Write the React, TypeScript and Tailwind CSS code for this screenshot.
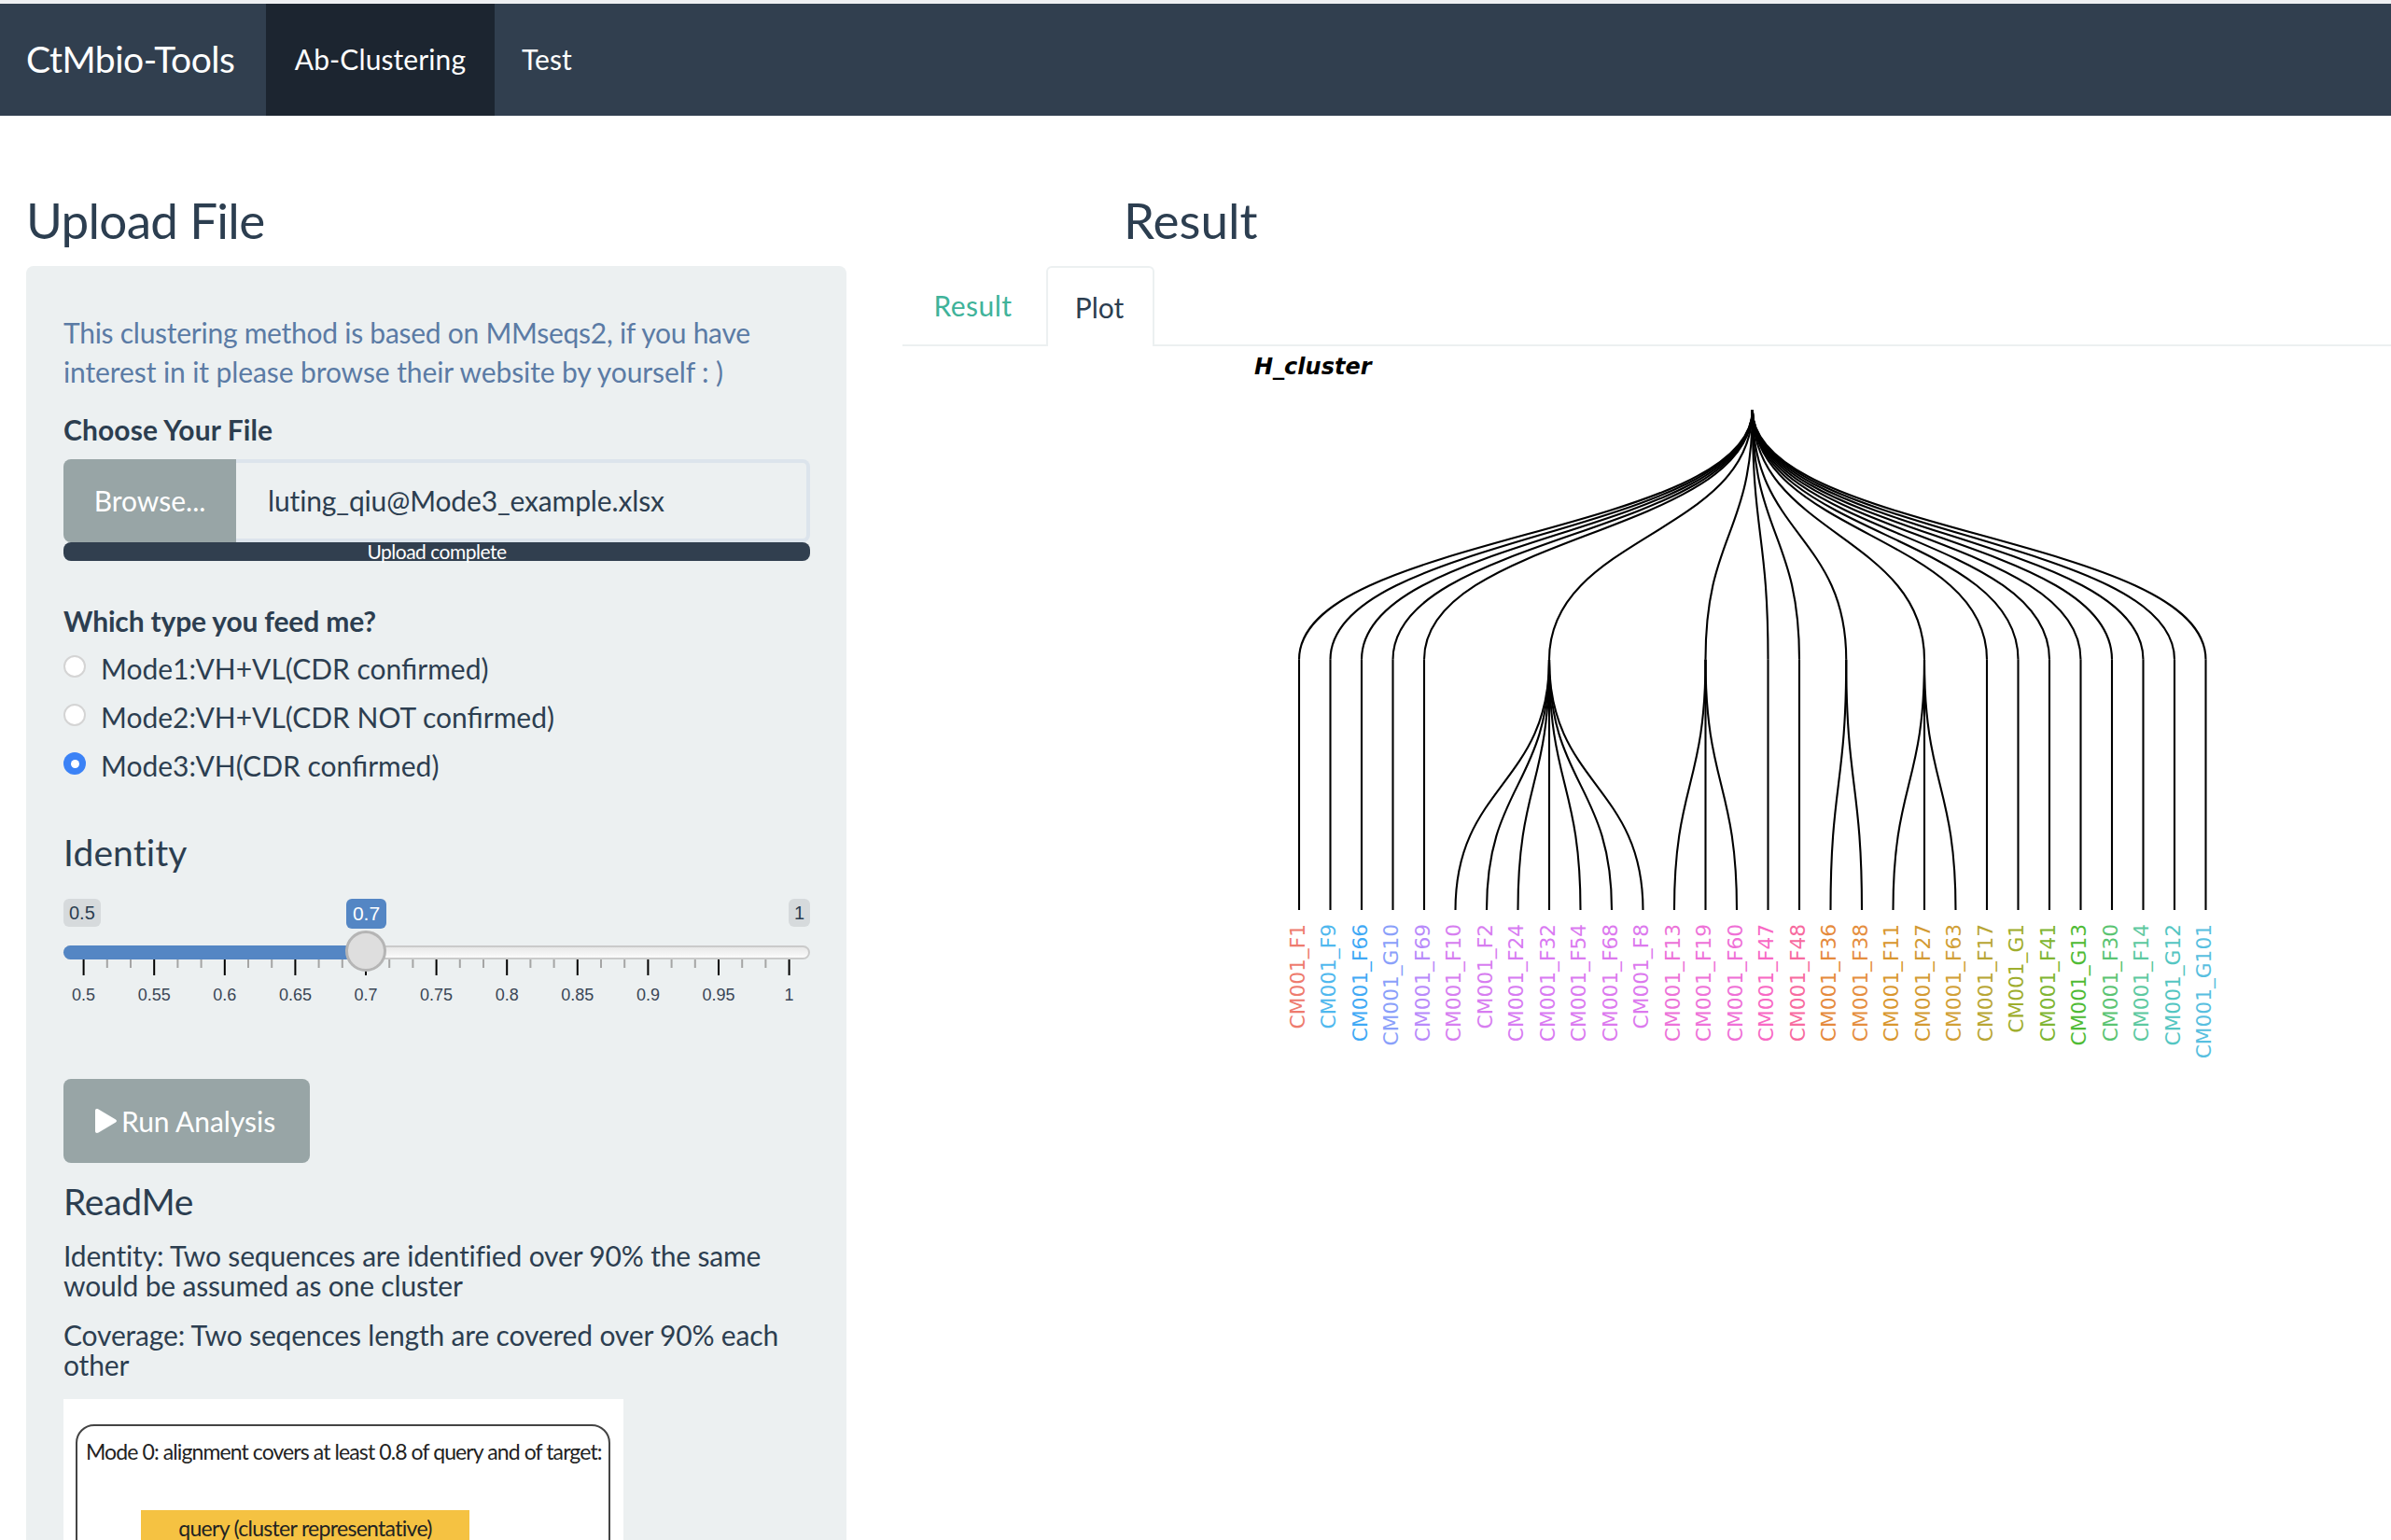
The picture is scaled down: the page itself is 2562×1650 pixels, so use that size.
import React from "react";

const X0 = 1392;
const DX = 33.5;
const leafX = (i: number) => X0 + i * DX;
const ROOT_Y = 439;
const MID_Y = 706.7;
const LEAF_Y = 975;

const labels: [string, string][] = [
  ["CM001_F1", "#ee7b6e"], ["CM001_F9", "#4fb8ee"], ["CM001_F66", "#3fa9f5"], ["CM001_G10", "#8aa0fa"],
  ["CM001_F69", "#b88afa"], ["CM001_F10", "#d67ef0"], ["CM001_F2", "#d77df0"], ["CM001_F24", "#d77bf2"],
  ["CM001_F32", "#d97af2"], ["CM001_F54", "#da7af0"], ["CM001_F68", "#dc79ee"], ["CM001_F8", "#dc79ee"],
  ["CM001_F13", "#ec72d8"], ["CM001_F19", "#ee72d8"], ["CM001_F60", "#ef70d6"], ["CM001_F47", "#f869c4"],
  ["CM001_F48", "#f76b9f"], ["CM001_F36", "#e58a3c"], ["CM001_F38", "#e58e3e"], ["CM001_F11", "#d9972e"],
  ["CM001_F27", "#d39a32"], ["CM001_F63", "#d1a036"], ["CM001_F17", "#b8a634"], ["CM001_G1", "#9fae2e"],
  ["CM001_F41", "#80b532"], ["CM001_G13", "#4fbb35"], ["CM001_F30", "#5ac472"], ["CM001_F14", "#5cc9a0"],
  ["CM001_G12", "#54c6c2"], ["CM001_G101", "#58bfe0"],
];

const diag = (x0: number, y0: number, x1: number, y1: number) => {
  const m = (y0 + y1) / 2;
  return `M${x0} ${y0}C${x0} ${m} ${x1} ${m} ${x1} ${y1}`;
};

const groups: number[][] = [
  [0], [1], [2], [3], [4], [5, 6, 7, 8, 9, 10, 11], [12, 13, 14], [15], [16], [17, 18], [19, 20, 21],
  [22], [23], [24], [25], [26], [27], [28], [29],
];

function Tree() {
  const rootX = (leafX(0) + leafX(29)) / 2;
  const paths: string[] = [];
  groups.forEach((g) => {
    const nx = (leafX(g[0]) + leafX(g[g.length - 1])) / 2;
    paths.push(diag(rootX, ROOT_Y, nx, MID_Y));
    g.forEach((i) => {
      if (g.length === 1) paths.push(`M${nx} ${MID_Y}L${nx} ${LEAF_Y}`);
      else paths.push(diag(nx, MID_Y, leafX(i), LEAF_Y));
    });
  });
  return (
    <svg width="1595" height="800" className="block">
      <g transform="translate(-967 -371)">
        <text x="1344" y="401" fontFamily="'DejaVu Sans', sans-serif" fontWeight="700" fontStyle="italic" fontSize="24" fill="#000">
          H_cluster
        </text>
        {paths.map((d, i) => (
          <path key={i} d={d} fill="none" stroke="#000" strokeWidth="2.1" />
        ))}
        {labels.map(([t, c], i) => (
          <text
            key={t}
            transform={`translate(${leafX(i) + 5.8} 990) rotate(-90)`}
            textAnchor="end"
            fontFamily="'DejaVu Sans', sans-serif"
            fontSize="21.7"
            fill={c}
          >
            {t}
          </text>
        ))}
      </g>
    </svg>
  );
}

const tickLabels = ["0.5", "0.55", "0.6", "0.65", "0.7", "0.75", "0.8", "0.85", "0.9", "0.95", "1"];

function Slider() {
  const x0 = 21.6;
  const dx = 75.6;
  const minors: number[] = [];
  for (let i = 0; i < 10; i++) {
    minors.push(x0 + i * dx + dx / 3, x0 + i * dx + (2 * dx) / 3);
  }
  return (
    <div className="relative h-[118px] w-[800px]">
      <div className="flex justify-between text-[20px] leading-[30px] text-[#2c3e50] font-['Liberation_Sans',sans-serif]">
        <span className="h-[30px] rounded-md bg-[#d6dadc] px-[6px]">0.5</span>
        <span className="h-[30px] rounded-md bg-[#d6dadc] px-[6px]">1</span>
      </div>
      <span className="absolute left-[303px] top-0 h-[32px] w-[43px] rounded-md bg-[#5486c4] text-center text-[21px] leading-[32px] text-white font-['Liberation_Sans',sans-serif]">
        0.7
      </span>
      <div className="mt-[20px] h-[15px] rounded-lg border-2 border-[#cacaca] bg-gradient-to-b from-[#e8e8e8] to-[#fbfbfb]" />
      <div className="absolute left-0 top-[50px] h-[15px] w-[312px] rounded-l-lg bg-[#5486c4]" />
      <svg width="800" height="68" className="absolute left-0 top-[65px]">
        {minors.map((x) => (
          <line key={x} x1={x} x2={x} y1="0" y2="9" stroke="#a5a5a5" strokeWidth="2" />
        ))}
        {tickLabels.map((t, i) => (
          <line key={t} x1={x0 + i * dx} x2={x0 + i * dx} y1="0" y2="17" stroke="#000" strokeWidth="2" />
        ))}
        {tickLabels.map((t, i) => (
          <text key={t} x={x0 + i * dx} y="44" textAnchor="middle" fontSize="18" fontFamily="'Liberation Sans', sans-serif" fill="#3a4656">
            {t}
          </text>
        ))}
      </svg>
      <div className="absolute left-[302px] top-[34px] h-[44px] w-[44px] rounded-full border-[3px] border-[#b5b5b5] bg-[#dedede]" />
    </div>
  );
}

function Radio({ checked, label, top }: { checked?: boolean; label: string; top: string }) {
  return (
    <div className={`flex h-[36px] items-center gap-[16px] ${top}`}>
      {checked ? (
        <span className="flex h-[24px] w-[24px] -translate-y-[2px] items-center justify-center rounded-full bg-[#3b82f6]">
          <span className="h-[9px] w-[9px] rounded-full bg-white" />
        </span>
      ) : (
        <span className="h-[24px] w-[24px] -translate-y-[2px] rounded-full border-2 border-[#d4d4d4] bg-white" />
      )}
      <span className="text-[30px] leading-[36px]">{label}</span>
    </div>
  );
}

export default function App() {
  return (
    <div className="h-[1650px] w-[2562px] overflow-hidden bg-white text-[#2c3e50] font-['Lato',sans-serif]">
      <div className="h-[4px] bg-[#eef0f2]" />
      <nav className="flex h-[120px] bg-[#313f4f] text-white">
        <div className="flex w-[285px] items-center pb-[2px] pl-[28px] text-[39px] tracking-[-0.5px]">CtMbio-Tools</div>
        <div className="flex w-[245px] items-center justify-center bg-[#1c2530] pb-[2px] text-[30px] tracking-[0.1px]">Ab-Clustering</div>
        <div className="flex items-center pb-[2px] pl-[29px] text-[30px]">Test</div>
      </nav>
      <div className="flex">
        <aside className="ml-[28px] w-[879px] shrink-0">
          <h3 className="mt-[83px] h-[58px] text-[53px] leading-[58px] tracking-[-0.7px]">Upload File</h3>
          <div className="mt-[20px] h-[1400px] rounded-lg bg-[#ecf0f1] px-[40px] pt-[50px]">
            <p className="text-[30px] leading-[42px] text-[#5b7ba5]">
              <span className="tracking-[-0.26px]">This clustering method is based on MMseqs2, if you have</span>
              <br />
              <span className="tracking-[-0.1px]">interest in it please browse their website by yourself : )</span>
            </p>
            <div className="mt-[21px] text-[30px] font-bold leading-[40px] tracking-[0.1px]">Choose Your File</div>
            <div className="mt-[12px] flex h-[89px] w-[800px]">
              <div className="flex w-[185px] items-center justify-center rounded-l-lg bg-[#98a5a6] text-[30px] text-white">Browse...</div>
              <div className="flex flex-1 items-center rounded-r-lg border-4 border-l-0 border-[#dce4ec] pl-[34px] text-[30px] tracking-[-0.14px]">
                luting_qiu@Mode3_example.xlsx
              </div>
            </div>
            <div className="flex h-[20px] w-[800px] items-center justify-center rounded-lg bg-[#313f4f] text-[21px] leading-[20px] tracking-[-0.5px] text-white">
              Upload complete
            </div>
            <div className="mt-[44px] h-[40px] text-[30px] font-bold leading-[40px] tracking-[-0.17px]">Which type you feed me?</div>
            <Radio label="Mode1:VH+VL(CDR confirmed)" top="mt-[13px]" />
            <Radio label="Mode2:VH+VL(CDR NOT confirmed)" top="mt-[16px]" />
            <Radio checked label="Mode3:VH(CDR confirmed)" top="mt-[16px]" />
            <h4 className="mt-[52px] h-[46px] text-[39px] leading-[46px] tracking-[0.1px]">Identity</h4>
            <div className="mt-[27px]">
              <Slider />
            </div>
            <button className="mt-[75px] flex h-[90px] w-[264px] items-center rounded-lg bg-[#98a5a6] pl-[34px] text-[30px] tracking-[-0.05px] text-white">
              <svg width="23" height="26" viewBox="0 0 23 26" className="mr-[5px]">
                <path d="M0 2C0 0 2 -.5 3.5 .5L22 11.5C23.3 12.3 23.3 13.7 22 14.5L3.5 25.5C2 26.5 0 26 0 24Z" fill="#fff" />
              </svg>
              Run Analysis
            </button>
            <h4 className="mt-[18px] h-[46px] text-[39px] leading-[46px] tracking-[-0.3px]">ReadMe</h4>
            <p className="mt-[19px] text-[30px] leading-[32px] tracking-[-0.17px]">
              Identity: Two sequences are identified over 90% the same would be assumed as one cluster
            </p>
            <p className="mt-[21px] text-[30px] leading-[32px] tracking-[-0.17px]">
              Coverage: Two seqences length are covered over 90% each other
            </p>
            <div className="mt-[21px] h-[300px] w-[600px] bg-white pl-[13px] pt-[27px]">
              <div className="h-[300px] w-[573px] rounded-[20px] border-2 border-[#444]">
                <div className="mt-[12px] whitespace-nowrap pl-[9px] text-[23px] leading-[30px] tracking-[-0.9px] text-[#222]">
                  Mode 0: alignment covers at least 0.8 of query and of target:
                </div>
                <div className="ml-[68px] mt-[48px] h-[60px] w-[352px] bg-[#f5c242] pt-[4px] text-center text-[23px] leading-[30px] tracking-[-0.7px] text-[#222]">
                  query (cluster representative)
                </div>
              </div>
            </div>
          </div>
        </aside>
        <main className="ml-[60px] flex-1">
          <h3 className="ml-[237px] mt-[83px] h-[58px] text-[53px] leading-[58px] tracking-[0px]">Result</h3>
          <div className="mt-[20px] flex h-[86px] border-b-2 border-[#ecf0f1] text-[30px]">
            <div className="flex w-[154px] items-center justify-center pr-[3px] tracking-[0.5px] text-[#3fb39a]">Result</div>
            <div className="flex h-[86px] w-[116px] items-center justify-center rounded-t-md border-2 border-b-0 border-[#ecf0f1] bg-white pr-[2px]">Plot</div>
          </div>
          <Tree />
        </main>
      </div>
    </div>
  );
}
